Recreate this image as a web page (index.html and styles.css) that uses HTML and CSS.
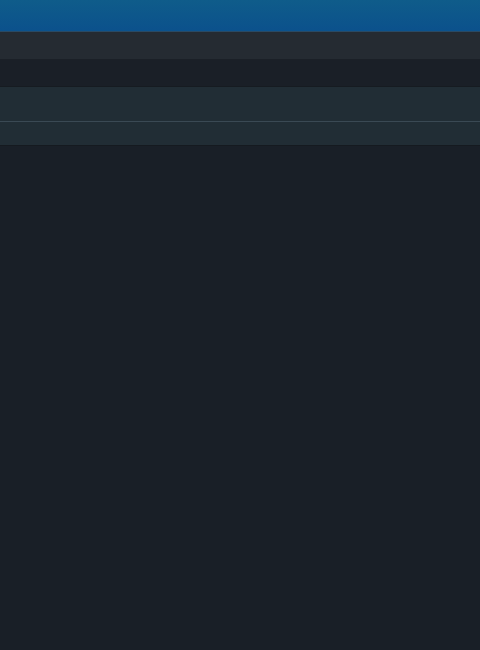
FILE: index.html
```html
<!DOCTYPE html>
<html lang="en">
<head>
  <meta charset="UTF-8">
  <title>App</title>
  <link rel="stylesheet" href="styles.css">
</head>
<body>
  <div class="topbar"></div>
  <div class="toolbar"></div>
  <div class="tabs"></div>
  <div class="panel">
    <div class="row row-first"></div>
    <div class="row row-second"></div>
  </div>
  <div class="content"></div>
</body>
</html>
```
FILE: styles.css
```css
html, body {
  margin: 0;
  padding: 0;
  height: 100%;
}
body {
  font-family: "Liberation Sans", Arial, sans-serif;
  background-color: #191f27;
}
.topbar {
  height: 31px;
  background: linear-gradient(to bottom, #0f5c8a, #0b518c);
  border-bottom: 1px solid #2a4a64;
}
.toolbar {
  height: 27px;
  background-color: #252b32;
  border-bottom: 1px solid #1b2027;
}
.tabs {
  height: 26px;
  background-color: #1a1f27;
  border-bottom: 1px solid #161b21;
}
.panel {
  background-color: #212d35;
  border-bottom: 1px solid #151a20;
}
.row-first {
  height: 34px;
  border-bottom: 1px solid #3a4954;
}
.row-second {
  height: 23px;
}
.content {
  background-color: #191f27;
}
```
